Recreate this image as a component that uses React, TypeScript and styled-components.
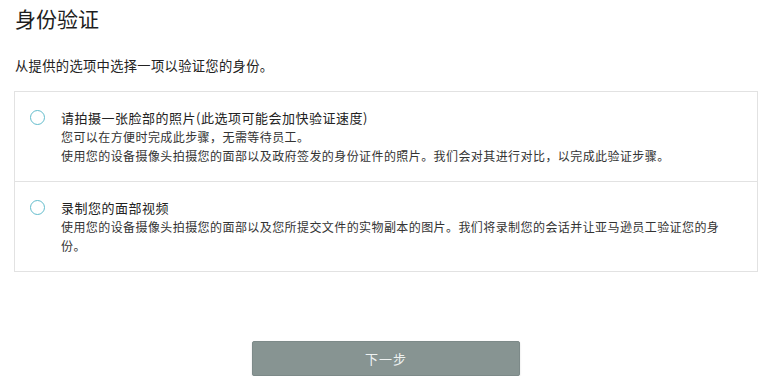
import styled, { createGlobalStyle } from "styled-components";

const GlobalStyle = createGlobalStyle`
  body {
    margin: 0;
    background: #ffffff;
    font-family: "Noto Sans CJK SC", "Noto Sans", sans-serif;
    color: #222;
  }
`;

const Page = styled.div`
  width: 744px;
  padding: 4px 0 0 14px;
`;

const Heading = styled.h1`
  margin: 0 0 0 1px;
  font-size: 21px;
  line-height: 28px;
  font-weight: 400;
  color: #1e1e1e;
`;

const Intro = styled.p`
  margin: 24px 0 0 1px;
  font-size: 13.3px;
  line-height: 20px;
  letter-spacing: 0.3px;
  color: #222;
`;

const Card = styled.div`
  margin-top: 15px;
  border: 1px solid #e2e2e2;
`;

const Option = styled.label`
  display: flex;
  align-items: flex-start;
  gap: 16px;
  padding: 16px 35px 16px 15px;
  cursor: pointer;
  & + & {
    border-top: 1px solid #e2e2e2;
  }
`;

const Radio = styled.span`
  flex: none;
  width: 13px;
  height: 13px;
  margin-top: 2px;
  border: 1.5px solid #62bccc;
  border-radius: 50%;
`;

const Body = styled.div`
  flex: 1;
  font-size: 12px;
  line-height: 19px;
  letter-spacing: 0.42px;
  color: #333;
`;

const OptionTitle = styled.div`
  font-size: 13px;
  letter-spacing: 0.5px;
  color: #222;
`;

const Footer = styled.div`
  display: flex;
  justify-content: center;
  margin-top: 69px;
`;

const NextButton = styled.button`
  width: 268px;
  height: 35px;
  border: 1px solid #7d8a89;
  border-radius: 2px;
  background: #879492;
  box-shadow: 0 1px 2px rgba(0, 0, 0, 0.15);
  color: #eef2f1;
  font-family: inherit;
  font-size: 13px;
  letter-spacing: 1px;
`;

const options = [
  {
    title: "请拍摄一张脸部的照片(此选项可能会加快验证速度)",
    lines: [
      "您可以在方便时完成此步骤，无需等待员工。",
      "使用您的设备摄像头拍摄您的面部以及政府签发的身份证件的照片。我们会对其进行对比，以完成此验证步骤。",
    ],
  },
  {
    title: "录制您的面部视频",
    lines: [
      "使用您的设备摄像头拍摄您的面部以及您所提交文件的实物副本的图片。我们将录制您的会话并让亚马逊员工验证您的身份。",
    ],
  },
];

export default function App() {
  return (
    <>
      <GlobalStyle />
      <Page>
        <Heading>身份验证</Heading>
        <Intro>从提供的选项中选择一项以验证您的身份。</Intro>
        <Card>
          {options.map((o) => (
            <Option key={o.title}>
              <Radio />
              <Body>
                <OptionTitle>{o.title}</OptionTitle>
                {o.lines.map((l) => (
                  <div key={l}>{l}</div>
                ))}
              </Body>
            </Option>
          ))}
        </Card>
        <Footer>
          <NextButton>下一步</NextButton>
        </Footer>
      </Page>
    </>
  );
}
